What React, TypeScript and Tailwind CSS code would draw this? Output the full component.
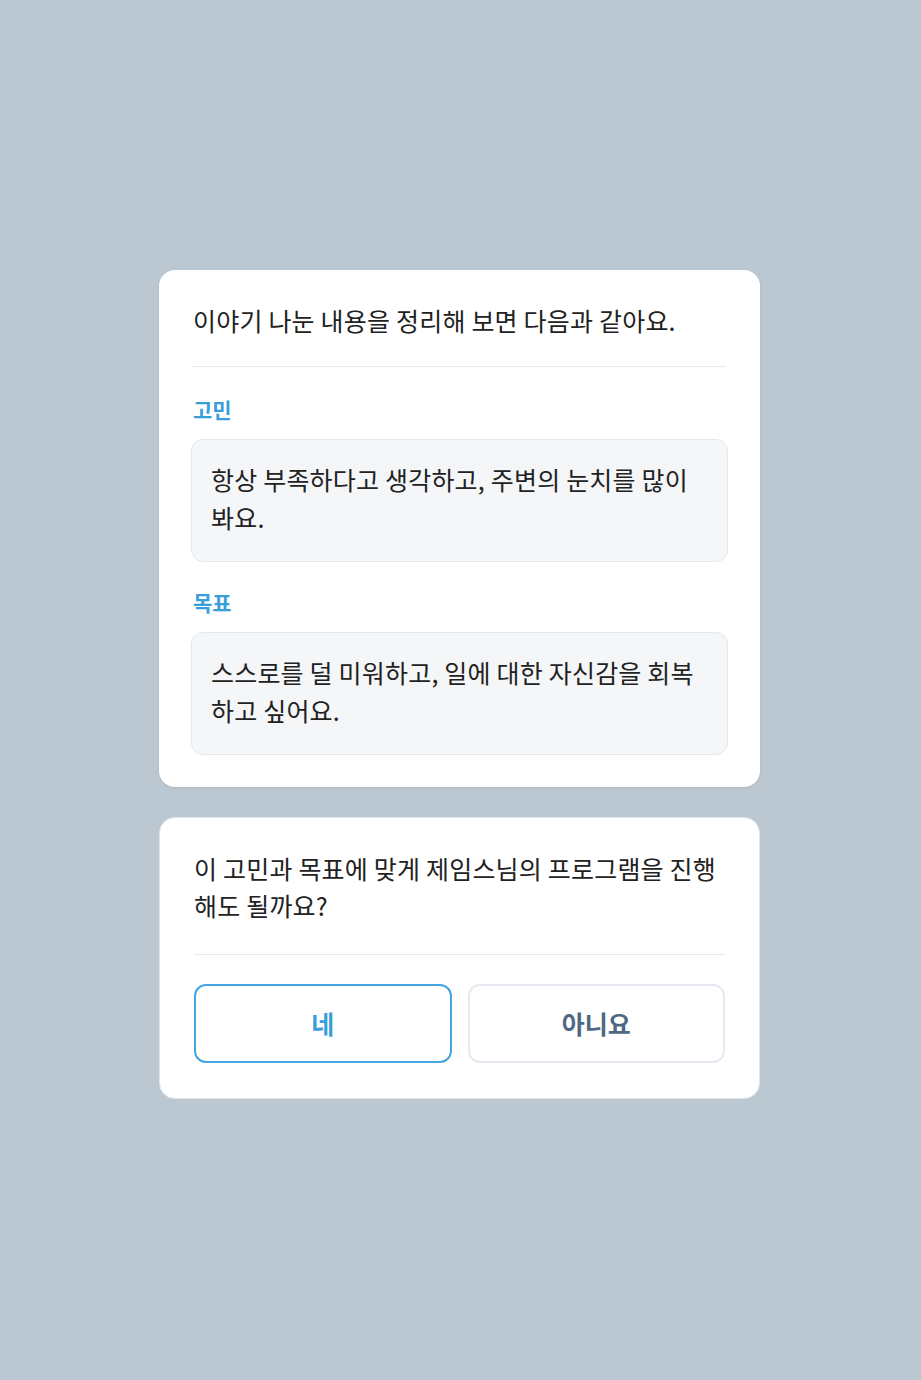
const font = { fontFamily: '"Noto Sans CJK KR", "Noto Sans", sans-serif' }

function Section({ label, text }: { label: string; text: string }) {
  return (
    <div>
      <div className="text-[21px] leading-[28px] font-semibold text-[#3a9fd8]">{label}</div>
      <div className="mt-4 -mx-[2px] rounded-xl border border-[#e3e8ec] bg-[#f4f6f8] px-[19px] pt-5 pb-[25px] text-[25px] leading-[38px] tracking-[0.2px] text-[#222]">
        {text}
      </div>
    </div>
  )
}

export default function App() {
  return (
    <div className="h-[1380px] bg-[#bcc8d1] pt-[270px]" style={font}>
      <div className="ml-[159px] flex w-[601px] flex-col gap-[30px]">
        <div className="rounded-2xl bg-white px-[34px] pt-[31px] pb-[32px] shadow-[0_1px_3px_rgba(0,0,0,0.08)]">
          <p className="text-[25px] leading-[38px] tracking-[0.2px] text-[#222]">이야기 나눈 내용을 정리해 보면 다음과 같아요.</p>
          <div className="mt-[27px] mb-[28px] h-px bg-[#e6e9ec]" />
          <div className="flex flex-col gap-[26px]">
            <Section label="고민" text="항상 부족하다고 생각하고, 주변의 눈치를 많이 봐요." />
            <Section label="목표" text="스스로를 덜 미워하고, 일에 대한 자신감을 회복하고 싶어요." />
          </div>
        </div>

        <div className="rounded-2xl border border-[#dfe5ea] bg-white px-[34px] pt-[32px] pb-[35px]">
          <p className="text-[25px] leading-[37px] tracking-[0.2px] text-[#222]">이 고민과 목표에 맞게 제임스님의 프로그램을 진행해도 될까요?</p>
          <div className="mt-[30px] mb-[29px] h-px bg-[#e6e9ec]" />
          <div className="grid grid-cols-2 gap-4">
            <button className="h-[79px] rounded-xl border-2 border-[#44a4df] bg-white text-[25px] font-semibold text-[#3a9fd8]">네</button>
            <button className="h-[79px] rounded-xl border-2 border-[#e6eaf0] bg-white text-[25px] font-semibold text-[#4d6883]">아니요</button>
          </div>
        </div>
      </div>
    </div>
  )
}
